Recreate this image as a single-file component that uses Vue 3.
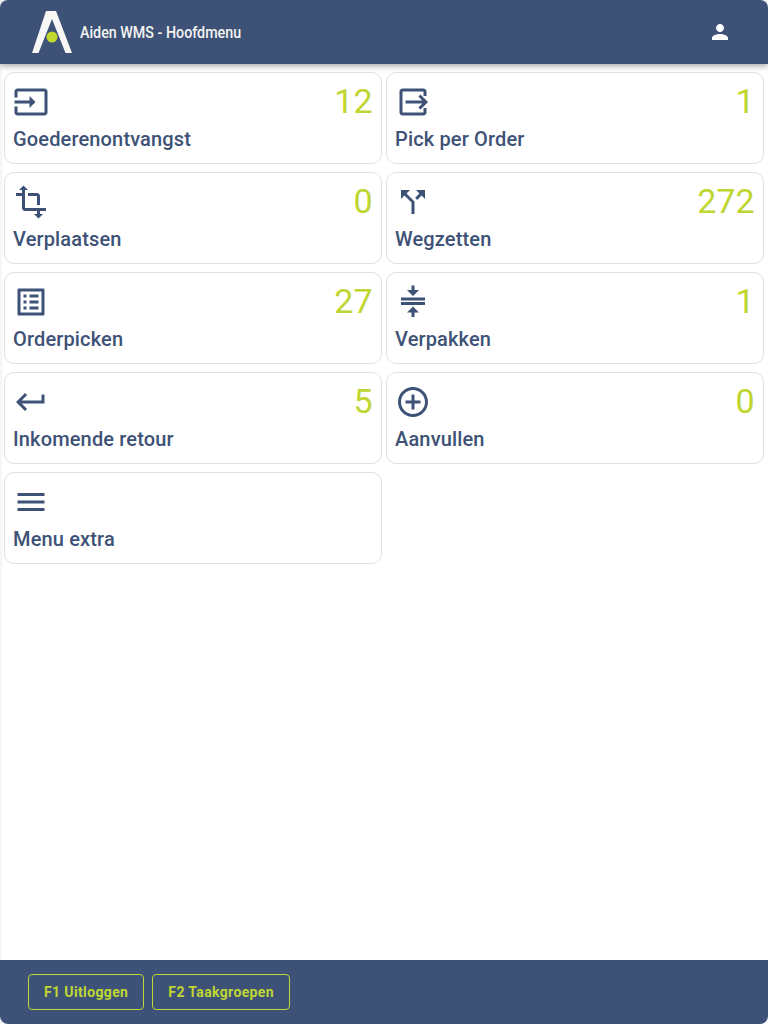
<script setup>
const tiles = [
  { label: 'Goederenontvangst', count: 12, icon: ['M21 3.01H3c-1.1 0-2 .9-2 2V9h2V4.99h18v14.03H3V15H1v4.01c0 1.1.9 1.98 2 1.98h18c1.1 0 2-.88 2-1.98v-14c0-1.11-.9-2-2-2zM11 16l4-4-4-4v3H1v2h10v3z'] },
  { label: 'Pick per Order', count: 1, icon: ['M5 3h14c1.1 0 2 .9 2 2v3h-2V5H5v14h14v-3h2v3c0 1.1-.9 2-2 2H5c-1.1 0-2-.9-2-2V5c0-1.1.9-2 2-2z', 'M7 11h11.17l-2.58-2.59L17 7l5 5-5 5-1.41-1.41L18.17 13H7z'] },
  { label: 'Verplaatsen', count: 0, icon: ['M22 18v-2H8V4h2L7 1 4 4h2v2H2v2h4v8c0 1.1.9 2 2 2h8v2h-2l3 3 3-3h-2v-2h4zM10 8h6v6h2V8c0-1.1-.9-2-2-2h-6v2z'] },
  { label: 'Wegzetten', count: 272, icon: ['M14 4l2.29 2.29-2.88 2.88 1.42 1.42 2.88-2.88L20 10V4zm-4 0H4v6l2.29-2.29 4.71 4.7V20h2v-8.41l-5.29-5.3z'] },
  { label: 'Orderpicken', count: 27, icon: ['M19 5v14H5V5h14m1.1-2H3.9c-.5 0-.9.4-.9.9v16.2c0 .4.4.9.9.9h16.2c.4 0 .9-.5.9-.9V3.9c0-.5-.5-.9-.9-.9zM11 7h6v2h-6V7zm0 4h6v2h-6v-2zm0 4h6v2h-6zM7 7h2v2H7zm0 4h2v2H7zm0 4h2v2H7z'] },
  { label: 'Verpakken', count: 1, icon: ['M4 9h16v2H4zM4 12h16v2H4zM11 22v-3H8l4-4 4 4h-3v3zM13 1v3h3l-4 4-4-4h3V1z'] },
  { label: 'Inkomende retour', count: 5, icon: ['M19 7v4H5.83l3.58-3.59L8 6l-6 6 6 6 1.41-1.41L5.83 13H21V7z'] },
  { label: 'Aanvullen', count: 0, icon: ['M13 7h-2v4H7v2h4v4h2v-4h4v-2h-4V7zm-1-5C6.48 2 2 6.48 2 12s4.48 10 10 10 10-4.48 10-10S17.52 2 12 2zm0 18c-4.41 0-8-3.59-8-8s3.59-8 8-8 8 3.59 8 8-3.59 8-8 8z'] },
  { label: 'Menu extra', count: null, icon: ['M3 18h18v-2H3v2zm0-5h18v-2H3v2zm0-7v2h18V6H3z'] },
]
</script>

<template>
  <div class="page">
    <header class="topbar">
      <svg class="logo" viewBox="0 0 40 42" width="40" height="42">
        <path d="M14 0H24L40 42H33.5L20 8L6.5 42H0Z" fill="#f7f7f5" />
        <circle cx="20" cy="26" r="5.5" fill="#c1d82f" />
      </svg>
      <div class="title">Aiden WMS - Hoofdmenu</div>
      <svg class="user" viewBox="0 0 24 24" width="24" height="24">
        <path d="M12 12c2.21 0 4-1.79 4-4s-1.79-4-4-4-4 1.79-4 4 1.79 4 4 4zm0 2c-2.67 0-8 1.34-8 4v2h16v-2c0-2.66-5.33-4-8-4z" fill="#fff" />
      </svg>
    </header>

    <main class="tiles">
      <div v-for="tile in tiles" :key="tile.label" class="tile">
        <div class="tile-top">
          <svg class="tile-icon" viewBox="0 0 24 24" width="36" height="36">
            <path v-for="d in tile.icon" :key="d" :d="d" fill="#3d5276" />
          </svg>
          <span v-if="tile.count !== null" class="count">{{ tile.count }}</span>
        </div>
        <div class="tile-label">{{ tile.label }}</div>
      </div>
    </main>

    <footer class="bottombar">
      <button class="fkey">F1 Uitloggen</button>
      <button class="fkey">F2 Taakgroepen</button>
    </footer>
  </div>
</template>

<style>
html, body {
  margin: 0;
  background: #fff;
}
</style>

<style scoped>
.page {
  height: 1024px;
  display: flex;
  flex-direction: column;
  font-family: Roboto, "Liberation Sans", sans-serif;
  background: #fff;
  box-shadow: inset 2px 0 0 #f6f6f6;
}

.topbar {
  height: 64px;
  flex: none;
  display: flex;
  align-items: center;
  padding: 0 36px 0 32px;
  background: #3d5276;
  border-radius: 8px 8px 0 0;
  box-shadow: 0 2px 6px rgba(0, 0, 0, 0.35);
  position: relative;
}

.logo {
  flex: none;
  margin-right: 8px;
}

.title {
  flex: 1;
  color: #f4f4f2;
  font-size: 16.5px;
  font-weight: 500;
  transform: scaleX(0.865);
  transform-origin: left center;
  white-space: nowrap;
}

.tiles {
  flex: 1;
  display: grid;
  grid-template-columns: 378px 378px;
  grid-auto-rows: 92px;
  align-content: start;
  gap: 8px 4px;
  padding: 8px 4px;
}

.tile {
  box-sizing: border-box;
  border: 1px solid #e0e0e0;
  border-radius: 10px;
  padding: 11px 8px 0;
  background: #fff;
}

.tile-top {
  display: flex;
  justify-content: space-between;
  height: 36px;
}

.tile-icon {
  display: block;
}

.count {
  font-size: 34px;
  line-height: 34px;
  color: #bfd632;
  padding-right: 0.5px;
}

.tile-label {
  margin-top: 7px;
  font-size: 20px;
  line-height: 24px;
  font-weight: 500;
  letter-spacing: 0.15px;
  color: #3d5276;
}

.bottombar {
  height: 64px;
  flex: none;
  box-sizing: border-box;
  display: flex;
  align-items: center;
  gap: 8px;
  padding: 0 28px;
  background: #3d5276;
  border-radius: 0 0 8px 8px;
}

.fkey {
  height: 36px;
  padding: 0 15px;
  background: transparent;
  border: 1px solid #bfd632;
  border-radius: 4px;
  color: #bfd632;
  font-family: inherit;
  font-size: 14px;
  font-weight: 700;
  letter-spacing: 0.37px;
}
</style>
